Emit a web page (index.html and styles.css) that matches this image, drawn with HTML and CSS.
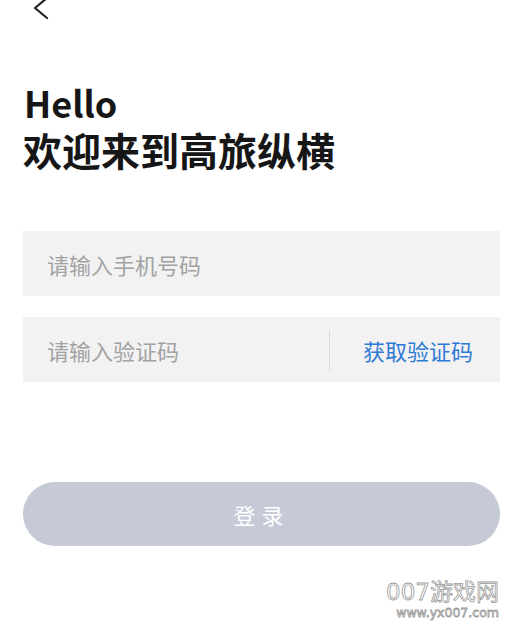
FILE: index.html
```
<!DOCTYPE html>
<html>
<head>
<meta charset="UTF-8" />
<title>登录</title>
<link rel="stylesheet" href="styles.css">
</head>
<body>
<div class="page">
	<div class="topbar">
		<svg class="back" width="20" height="24" viewBox="0 0 20 24"><path d="M15 0 L3 10 L15 20" fill="none" stroke="#222" stroke-width="2.2" stroke-linecap="round" stroke-linejoin="round"/></svg>
	</div>
	<h1 class="title">
		<div class="title-hello">Hello</div>
		<div class="title-welcome">欢迎来到高旅纵横</div>
	</h1>
	<form class="login">
		<div class="field">
			<input class="field-input" type="tel" placeholder="请输入手机号码">
		</div>
		<div class="field">
			<input class="field-input" type="text" placeholder="请输入验证码">
			<span class="divider"></span>
			<a class="get-code">获取验证码</a>
		</div>
		<button class="submit" type="button">登录</button>
	</form>
	<div class="watermark">
		<div class="wm-name">007游戏网</div>
		<div class="wm-url">www.yx007.com</div>
	</div>
</div>
</body>
</html>
```
FILE: styles.css
```
body{
	margin: 0 ;
	padding: 0 ;
	background: #fff ;
	font-family: "Noto Sans CJK SC", "Noto Sans", sans-serif ;
}
.page{
	position: relative ;
	height: 634px ;
	padding: 0 13px 0 23px ;
	overflow: hidden ;
}
.topbar{
	height: 20px ;
}
.back{
	display: block ;
	margin: -2px 0 0 9px ;
	overflow: visible ;
}
.title{
	margin: 64px 0 0 0 ;
	font-weight: 700 ;
	color: #161616 ;
}
.title-hello{
	padding-left: 1px ;
	font-size: 36px ;
	line-height: 40px ;
}
.title-welcome{
	margin-top: 3px ;
	font-size: 39px ;
	line-height: 48px ;
}
.login{
	margin-top: 58px ;
}
.field{
	display: flex ;
	align-items: center ;
	height: 65px ;
	margin-bottom: 21px ;
	background: #f2f2f2 ;
}
.field-input{
	flex: 1 ;
	min-width: 0 ;
	height: 100% ;
	padding: 0 0 0 24px ;
	border: none ;
	outline: none ;
	background: transparent ;
	font-family: inherit ;
	font-size: 22px ;
	color: #333 ;
}
.field-input::placeholder{
	color: #a2a2a2 ;
}
.divider{
	width: 1px ;
	height: 40px ;
	background: #dcdcdc ;
}
.get-code{
	padding: 0 27px 0 33px ;
	font-size: 22px ;
	color: #2f7ad6 ;
}
.submit{
	display: block ;
	width: 100% ;
	height: 64px ;
	margin-top: 100px ;
	border: none ;
	border-radius: 32px ;
	background: #c6cad6 ;
	color: #fff ;
	font-family: inherit ;
	font-size: 22px ;
	letter-spacing: 6px ;
	padding-left: 6px ;
}
.watermark{
	position: absolute ;
	right: 14px ;
	top: 578px ;
	text-align: right ;
	color: #fff ;
	-webkit-text-stroke: 0.8px #9a9a9a ;
	font-family: "DejaVu Sans", "Noto Sans CJK SC", sans-serif ;
}
.wm-name{
	font-size: 23px ;
	line-height: 28px ;
}
.wm-url{
	font-size: 12.5px ;
	line-height: 14px ;
}
```
